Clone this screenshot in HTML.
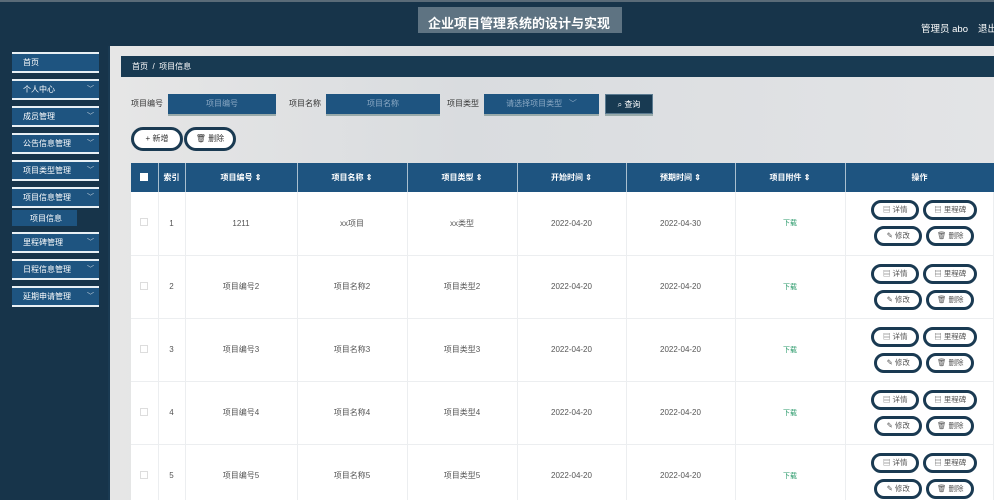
<!DOCTYPE html>
<html><head><meta charset="utf-8"><style>
*{margin:0;padding:0;box-sizing:border-box}
html,body{width:994px;height:500px;overflow:hidden}
body{background:#1a3a52;font-family:"Liberation Sans","Noto Sans CJK SC",sans-serif;position:relative}
.top{position:absolute;left:0;top:0;width:994px;height:46px;background:#17344a;border-top:2px solid #5a6b78}
.title{position:absolute;left:418px;top:5px;width:204px;height:26px;background:#5e7382;color:#fff;font-size:13px;font-weight:bold;padding:6px 0 0 10px;white-space:nowrap}
.usr{position:absolute;top:17px;color:#fff;font-size:9.5px;white-space:nowrap}
.side{position:absolute;left:0;top:46px;width:108px;height:454px;background:#17344a}
.mi{position:absolute;left:12px;width:87px;height:21px;background:#1e5480;border-top:2px solid #e8f0f5;border-bottom:2px solid #e8f0f5;color:#fff;font-size:8px;padding:3px 0 0 11px}
.mi i{position:absolute;right:5px;top:3px;font-style:normal;font-size:7px;color:#c8d5de}
.main{position:absolute;left:110px;top:46px;width:884px;height:454px;background:linear-gradient(90deg,#e6e6e6,#d9dcdf 40%,#e3e4e6)}
.bc{position:absolute;left:121px;top:56px;width:873px;height:21px;background:#183a52;color:#fff;font-size:8px;padding:5px 0 0 11px}
.lbl{position:absolute;top:98px;font-size:8px;color:#333}
.inp{position:absolute;top:94px;height:20px;background:#1e5480;color:#8ba9c4;font-size:8px;text-align:center;padding-top:4px;box-shadow:0 2px 0 #9aa}
.btn{position:absolute;background:#fff;border:3px solid #1a3a52;border-radius:12px;font-size:8px;color:#333;text-align:center}
table{position:absolute;left:131px;top:163px;border-collapse:collapse;width:863px;font-size:8px;color:#555;table-layout:fixed}
th{background:#1e5480;color:#fff;height:29px;border-right:1px solid #a9bfcf;font-weight:bold}
td{background:#fff;height:63px;text-align:center;border-right:1px solid #eceef0;border-bottom:1px solid #eceef0;padding:0;white-space:nowrap}
td.op{padding-left:10px}
.cb{display:inline-block;width:8px;height:8px;border:1px solid #ddd;background:#fff}
.ob{display:inline-block;width:48px;height:20px;border:3px solid #1a3a52;border-radius:10px;font-size:7.5px;color:#555;line-height:14px;margin:3px 2px}
.ob.w{width:54px}
.dl{color:#2a9a6a;font-size:7px}
</style></head><body>
<div class="top"><div class="title">企业项目管理系统的设计与实现</div>
<span class="usr" style="left:921px;top:19px">管理员 abo</span><span class="usr" style="left:978px;top:19px">退出</span></div>
<div class="side">
<div class="mi" style="top:6px">首页</div>
<div class="mi" style="top:33px">个人中心<i>﹀</i></div>
<div class="mi" style="top:60px">成员管理<i>﹀</i></div>
<div class="mi" style="top:87px">公告信息管理<i>﹀</i></div>
<div class="mi" style="top:114px">项目类型管理<i>﹀</i></div>
<div class="mi" style="top:141px">项目信息管理<i>﹀</i></div>
<div style="position:absolute;left:12px;top:164px;width:65px;height:16px;background:#1e5480;color:#fff;font-size:8px;padding:3px 0 0 18px">项目信息</div>
<div class="mi" style="top:186px">里程碑管理<i>﹀</i></div>
<div class="mi" style="top:213px">日程信息管理<i>﹀</i></div>
<div class="mi" style="top:240px">延期申请管理<i>﹀</i></div>
</div>
<div class="main"></div>
<div class="bc">首页 &nbsp;/ &nbsp;项目信息</div>
<span class="lbl" style="left:131px">项目编号</span><div class="inp" style="left:168px;width:108px">项目编号</div>
<span class="lbl" style="left:289px">项目名称</span><div class="inp" style="left:326px;width:114px">项目名称</div>
<span class="lbl" style="left:447px">项目类型</span><div class="inp" style="left:484px;width:115px">请选择项目类型 &nbsp;&nbsp;﹀</div>
<div class="inp" style="left:605px;width:48px;background:#183a52;color:#fff;border:1px solid #5a7a90">⌕ 查询</div>
<div class="btn" style="left:131px;top:127px;width:52px;height:24px;line-height:18px">+ 新增</div>
<div class="btn" style="left:184px;top:127px;width:52px;height:24px;line-height:18px">🗑 删除</div>
<table>
<colgroup><col style="width:27px"><col style="width:27px"><col style="width:112px"><col style="width:110px"><col style="width:110px"><col style="width:109px"><col style="width:109px"><col style="width:110px"><col></colgroup>
<tr><th><span class="cb" style="border:none"></span></th><th>索引</th><th>项目编号 ⇕</th><th>项目名称 ⇕</th><th>项目类型 ⇕</th><th>开始时间 ⇕</th><th>预期时间 ⇕</th><th>项目附件 ⇕</th><th style="border-right:none">操作</th></tr>
<tr><td><span class="cb"></span></td><td>1</td><td>1211</td><td>xx项目</td><td>xx类型</td><td>2022-04-20</td><td>2022-04-30</td><td><span class="dl">下载</span></td><td class="op"><span class="ob">▤ 详情</span><span class="ob w">▤ 里程碑</span><br><span class="ob">✎ 修改</span><span class="ob">🗑 删除</span></td></tr>
<tr><td><span class="cb"></span></td><td>2</td><td>项目编号2</td><td>项目名称2</td><td>项目类型2</td><td>2022-04-20</td><td>2022-04-20</td><td><span class="dl">下载</span></td><td class="op"><span class="ob">▤ 详情</span><span class="ob w">▤ 里程碑</span><br><span class="ob">✎ 修改</span><span class="ob">🗑 删除</span></td></tr>
<tr><td><span class="cb"></span></td><td>3</td><td>项目编号3</td><td>项目名称3</td><td>项目类型3</td><td>2022-04-20</td><td>2022-04-20</td><td><span class="dl">下载</span></td><td class="op"><span class="ob">▤ 详情</span><span class="ob w">▤ 里程碑</span><br><span class="ob">✎ 修改</span><span class="ob">🗑 删除</span></td></tr>
<tr><td><span class="cb"></span></td><td>4</td><td>项目编号4</td><td>项目名称4</td><td>项目类型4</td><td>2022-04-20</td><td>2022-04-20</td><td><span class="dl">下载</span></td><td class="op"><span class="ob">▤ 详情</span><span class="ob w">▤ 里程碑</span><br><span class="ob">✎ 修改</span><span class="ob">🗑 删除</span></td></tr>
<tr><td><span class="cb"></span></td><td>5</td><td>项目编号5</td><td>项目名称5</td><td>项目类型5</td><td>2022-04-20</td><td>2022-04-20</td><td><span class="dl">下载</span></td><td class="op"><span class="ob">▤ 详情</span><span class="ob w">▤ 里程碑</span><br><span class="ob">✎ 修改</span><span class="ob">🗑 删除</span></td></tr>
</table>
</body></html>
